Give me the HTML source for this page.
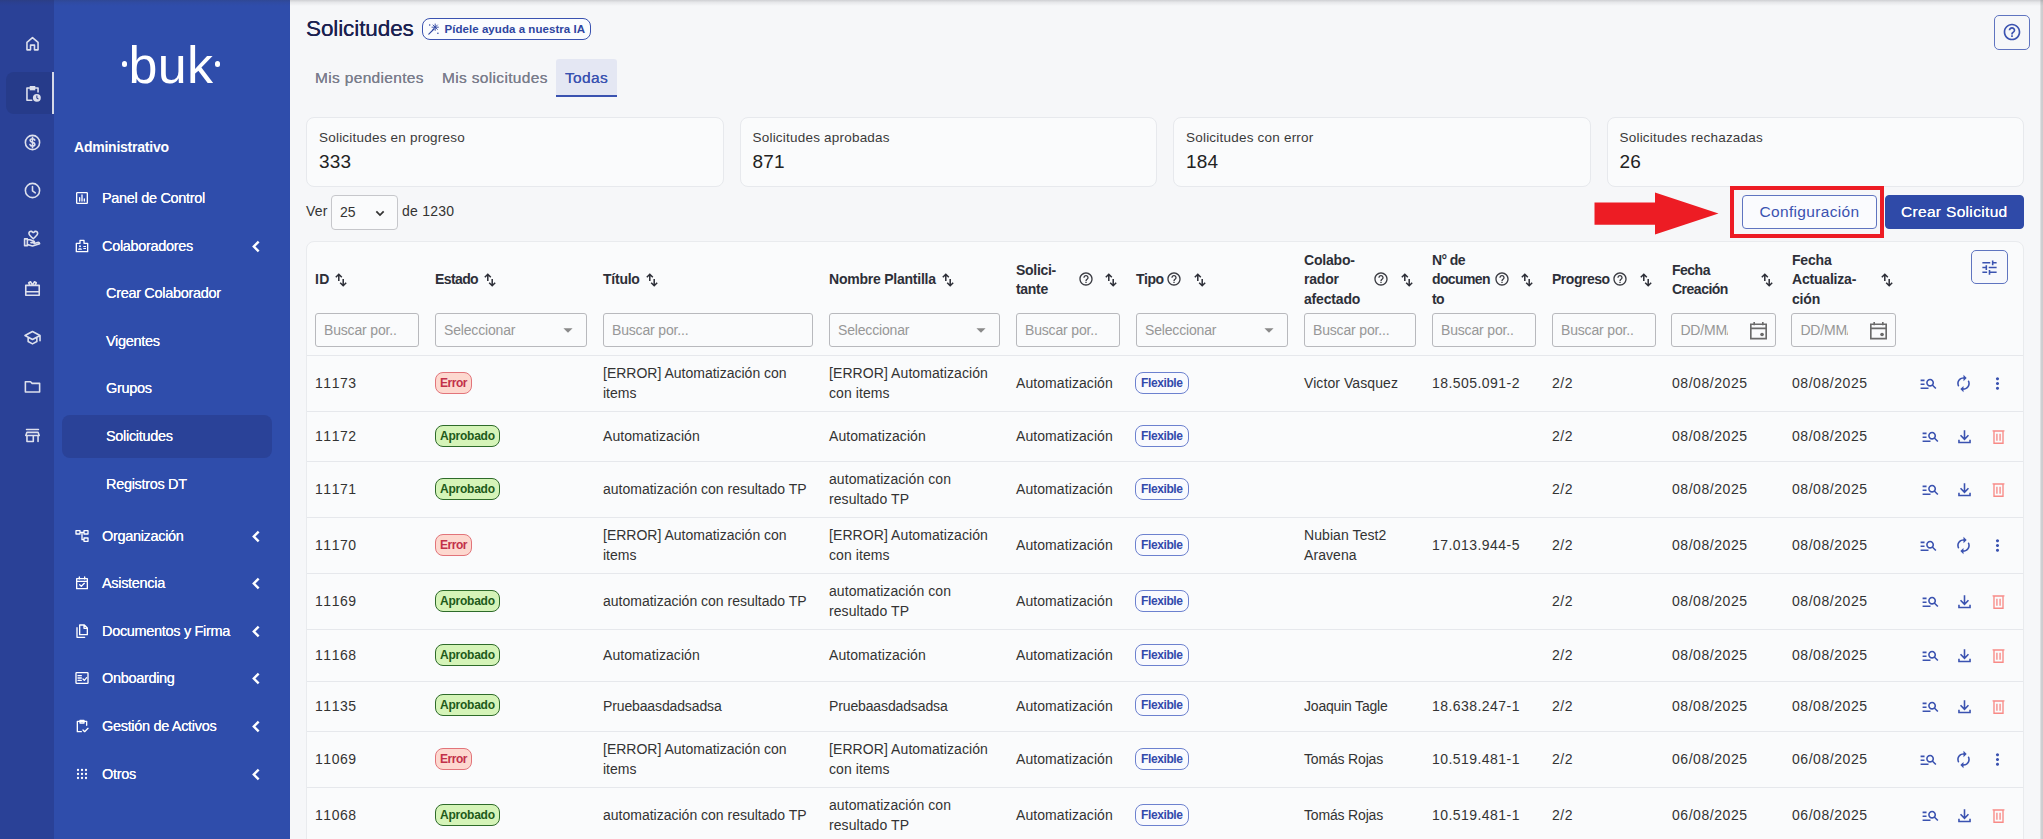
<!DOCTYPE html>
<html lang="es">
<head>
<meta charset="utf-8">
<title>Solicitudes</title>
<style>
*{box-sizing:border-box;margin:0;padding:0}
html,body{width:2043px;height:839px;overflow:hidden}
body{position:relative;background:#f6f7f9;font-family:"Liberation Sans",sans-serif;font-size:14px;color:#333;-webkit-font-smoothing:antialiased}
.abs{position:absolute}
/* rail */
#rail{position:absolute;left:0;top:0;width:54px;height:839px;background:#2a4197}
#rail .ri{position:absolute;left:22.500px;margin-top:1.500px;width:19px;height:19px;color:#dde0ed}
#rail .ri svg{width:19px;height:19px;display:block}
#rail .act{position:absolute;left:6px;top:72px;width:46px;height:42px;border-radius:8px 0 0 8px;background:#263b8a}
#rail .bar{position:absolute;left:52px;top:72px;width:2px;height:42px;background:#d5d9e8}
/* sidebar */
#side{position:absolute;left:54px;top:0;width:236px;height:839px;background:#2f4dab;color:#fff}
#side .logo{position:absolute;left:-54px;top:0;width:290px;height:110px;color:#fff}
#side .logo b{position:absolute;left:128.500px;top:24.500px;font-weight:normal;font-size:52px;line-height:80px;letter-spacing:.3px}
#side .logo i{position:absolute;top:61px;width:5.500px;height:5.500px;border-radius:50%;background:#fff}
#side .sec{position:absolute;left:20px;top:138px;font-weight:bold;font-size:14px;line-height:18px;letter-spacing:-.23px}
#side .it{position:absolute;left:48px;font-size:14.5px;line-height:18px;white-space:nowrap;letter-spacing:-.32px;text-shadow:0 0 .25px #fff}
#side .sub{left:52px}
#side .ic{position:absolute;left:20px;width:16px;height:16px;color:#fff}
#side .ic svg{width:16px;height:16px;display:block}
#side .chev{position:absolute;left:195.500px;width:13px;height:13px}
#side .sel{position:absolute;left:8px;top:415px;width:210px;height:43px;border-radius:8px;background:#2a4298}
/* main */
h1{position:absolute;left:306px;top:15px;font-size:22.5px;line-height:28px;font-weight:normal;color:#1b2150;letter-spacing:-.1px;text-shadow:0 0 .6px #1b2150}
.ai{position:absolute;left:422px;top:18px;width:169px;height:22px;border:1px solid #3a52b0;border-radius:8px;background:#fbfcfe;color:#2e45a0;font-weight:bold;font-size:11.500px;line-height:20.500px;white-space:nowrap;padding-left:21.500px;letter-spacing:.05px}
.ai svg{position:absolute;left:5px;top:3.500px;width:12px;height:12px}
.tab{position:absolute;top:67.500px;text-shadow:0 0 .4px currentColor;font-size:15.5px;line-height:20px;color:#7a7d8c;white-space:nowrap;letter-spacing:.33px}
.tabsel{position:absolute;left:556px;top:59px;width:61px;height:38px;background:#e4e7f3;border-bottom:2px solid #3a52b0;border-radius:3px 3px 0 0}
.help{position:absolute;left:1994px;top:15px;width:36px;height:35px;border:1px solid #5f74c0;border-radius:5px;color:#3a52b0}
.help svg{position:absolute;left:7px;top:6px;width:20px;height:20px}
.stat{position:absolute;top:117px;width:417.500px;height:70px;background:#fafbfc;border:1px solid #e7e9ed;border-radius:8px}
.stat .l{position:absolute;left:12px;top:11px;font-size:13.5px;line-height:18px;color:#3a3a3a;white-space:nowrap;letter-spacing:.21px}
/* toolbar */
.tb{position:absolute;top:202px;font-size:14px;line-height:18px;color:#333;white-space:nowrap;letter-spacing:.25px}
.selbox{position:absolute;left:331px;top:195px;width:67px;height:35px;border:1px solid #c6c7cb;border-radius:4px;background:#fafbfc}
.selbox span{position:absolute;left:8px;top:7px;font-size:14px;line-height:18px;color:#333}
.selbox svg{position:absolute;left:40px;top:9px;width:16px;height:16px}
.arrow{position:absolute;left:1594px;top:192px}
.redbox{position:absolute;left:1730px;top:186px;width:153.500px;height:51.500px;border:4px solid #ed1c24}
.btn{position:absolute;top:195px;height:34.400px;border-radius:4px;font-size:15.5px;line-height:32px;text-align:center;white-space:nowrap;letter-spacing:.33px}
.cfg{left:1742px;width:135px;border:1px solid #5f74c0;background:#fafbfe;color:#3a52b0}
.crear{left:1884.500px;width:139.500px;border:1px solid #2f4aa8;background:#2f4aa8;color:#fff;text-shadow:0 0 .5px #fff}
/* table */
.card{position:absolute;left:306px;top:241px;width:1718px;height:620px;background:#fafbfc;border:1px solid #e9ebee;border-radius:8px 8px 0 0;overflow:hidden}
.th{position:absolute;font-weight:bold;font-size:14px;line-height:19.400px;margin-top:.7px;color:#2d2f38;white-space:nowrap;letter-spacing:-.35px}
.hi{position:absolute;width:16px;height:16px;color:#3a3b42}
.hi svg{width:16px;height:16px;display:block}
.si{position:absolute;width:12px;height:14px;color:#2b2d36}
.si svg{width:12px;height:14px;display:block}
.tune{position:absolute;left:1664px;top:8px;width:37px;height:34px;border:1px solid #5f74c0;border-radius:5px;color:#3a52b0;background:#f7f8fc}
.tune svg{position:absolute;left:8px;top:7px;width:19px;height:19px}
.fi{position:absolute;top:71px;height:34px;border:1px solid #b8b9bd;border-radius:3px;background:#fafbfc;color:#979797;font-size:14px;line-height:32px;white-space:nowrap;overflow:hidden;letter-spacing:-.17px}
.fi span{position:absolute;left:8px;top:0}
.fi .car{position:absolute;right:7px;top:5px;width:22px;height:22px;color:#8a8a8a}
.fi .car svg,.fi .cal svg{width:100%;height:100%;display:block}
.fi .cal{position:absolute;right:5px;top:5px;width:23px;height:23px;color:#6a6a6a}
.fd span{width:48px;overflow:hidden}
.tr{position:absolute;left:0;width:1717px;border-top:1px solid #e6e8ec}
.tr .c{position:absolute;top:0;height:100%;display:flex;align-items:center;font-size:14px;line-height:19.3px;margin-top:0px;color:#333;white-space:nowrap;letter-spacing:.08px}
.tr .n{font-kerning:none;letter-spacing:.55px}
.tr .d{letter-spacing:.45px}
.bd{position:relative;top:-.5px;display:inline-block;height:22px;line-height:20px;border-radius:8px;font-size:12px;padding:0 4px;border:1px solid;letter-spacing:-.2px}
.er{letter-spacing:-.45px;background:#fdd8cf;border-color:#e2747a;color:#c23049}
.ap{letter-spacing:-.24px;background:#d5f4b8;border-color:#2e6b2a;color:#1e5a1a}
.fl{letter-spacing:-.39px;padding:0 5px;background:#f9fafe;border-color:#6c81cf;color:#3349ab}
.ai2{position:absolute;top:50%;margin-top:-9.500px;width:19px;height:19px;color:#3a52b0}
.ai2 svg{width:19px;height:19px;display:block}
.ai2.red{color:#f88a86}
.edgeR{position:absolute;left:2039.5px;top:0;width:4px;height:839px;background:linear-gradient(90deg,#e8e9eb,#cfd0d2 35%,#c9cacc)}
.edgeT{position:absolute;left:0;top:0;width:2043px;height:6px;background:linear-gradient(180deg,rgba(50,50,60,.2),rgba(50,50,60,.08) 40%,rgba(50,50,60,0))}
.stat .v{position:absolute;left:12px;top:32px;font-size:19px;line-height:24px;color:#222;letter-spacing:.15px}
</style>
</head>
<body>
<div id="rail">
<div class="act"></div><div class="bar"></div>
<i class="ri" style="top:32px"><svg viewBox="0 0 24 24"><path fill="none" stroke="currentColor" stroke-width="2" stroke-linejoin="round" stroke-linecap="round" d="M5 10.500L12 4.500l7 6V20h-4.500v-6h-5v6H5z"/></svg></i>
<i class="ri" style="top:82px"><svg viewBox="0 0 24 24"><path fill="none" stroke="currentColor" stroke-width="2" stroke-linejoin="round" stroke-linecap="round" d="M11 20.500H5V5h14v5"/><path fill="currentColor" d="M8.500 2.500h7V8h-7z"/><circle cx="17.500" cy="17.500" r="5" fill="currentColor"/><path fill="none" stroke="#263b8a" stroke-width="1.300" d="M17.500 14.500v3.200l2 1.500"/></svg></i>
<i class="ri" style="top:131px"><svg viewBox="0 0 24 24"><circle cx="12" cy="12" r="9" fill="none" stroke="currentColor" stroke-width="2" stroke-linejoin="round" stroke-linecap="round"/><path fill="none" stroke="currentColor" stroke-width="2" stroke-linejoin="round" stroke-linecap="round" stroke-width="1.800" d="M15 9c-.5-1.200-1.600-1.800-3-1.800-1.700 0-3 .9-3 2.300 0 3 6 1.700 6 4.800 0 1.500-1.300 2.400-3 2.400-1.600 0-2.800-.8-3.200-2.100M12 5.500v13"/></svg></i>
<i class="ri" style="top:179px"><svg viewBox="0 0 24 24"><circle cx="12" cy="12" r="9" fill="none" stroke="currentColor" stroke-width="2" stroke-linejoin="round" stroke-linecap="round"/><path fill="none" stroke="currentColor" stroke-width="2" stroke-linejoin="round" stroke-linecap="round" d="M12 7v5.500l3.500 2.500"/></svg></i>
<i class="ri" style="top:227px"><svg viewBox="0 0 24 24"><path fill="currentColor" d="M16 2c-1.200 0-2.300.7-3 1.600C12.300 2.700 11.200 2 10 2 8 2 6.500 3.600 6.500 5.500c0 2.900 4 5.700 6.500 8 2.500-2.300 6.500-5.100 6.500-8C19.500 3.600 18 2 16 2zm-3 8.900c-2.200-1.900-4.500-3.900-4.500-5.400C8.500 4.700 9.200 4 10 4c.9 0 1.800.8 2.100 1.500h1.800C14.200 4.800 15.100 4 16 4c.8 0 1.500.7 1.500 1.500 0 1.500-2.300 3.500-4.500 5.400z"/><path fill="none" stroke="currentColor" stroke-width="2" stroke-linejoin="round" stroke-linecap="round" d="M2 12.500h3.500v8.500H2zM5.500 13.500h3.300l5 1.900c.8.300.9 1.800-.4 1.800H10M5.500 19.500l6.500 2 9-3c-.3-1.300-1.400-1.700-2.500-1.500l-4.500 1.300"/></svg></i>
<i class="ri" style="top:277px"><svg viewBox="0 0 24 24"><path fill="none" stroke="currentColor" stroke-width="2" stroke-linejoin="round" stroke-linecap="round" d="M3.500 8h17v12.500h-17zM3.500 16h17M9 8L7.200 4.800 9.500 3.500 12 7.500l2.500-4 2.300 1.300L15 8"/></svg></i>
<i class="ri" style="top:326px"><svg viewBox="0 0 24 24"><path fill="none" stroke="currentColor" stroke-width="2" stroke-linejoin="round" stroke-linecap="round" d="M2.500 9.500L12 4.500l9.500 5L12 14.500zM6.500 12v5L12 20l5.500-3v-5M21.500 9.500V16"/></svg></i>
<i class="ri" style="top:375px"><svg viewBox="0 0 24 24"><path fill="none" stroke="currentColor" stroke-width="2" stroke-linejoin="round" stroke-linecap="round" d="M3 6h6.500l2 2H21v11H3z"/></svg></i>
<i class="ri" style="top:424px"><svg viewBox="0 0 24 24"><path fill="none" stroke="currentColor" stroke-width="2" stroke-linejoin="round" stroke-linecap="round" d="M4.500 4.500h15M5 8h14l1.500 4h-17zM5 12v7.500h8V12M19 12v7.500"/></svg></i>
</div>
<div id="side">
<div class="logo"><i style="left:121.700px"></i><b>buk</b><i style="left:214.700px"></i></div>
<div class="sec">Administrativo</div>
<div class="sel"></div>
<div class="it" style="top:189px">Panel de Control</div>
<i class="ic" style="top:190px"><svg viewBox="0 0 24 24"><rect x="4" y="4" width="16" height="16" rx="1" fill="none" stroke="currentColor" stroke-width="2" stroke-linejoin="round" stroke-linecap="round"/><path fill="none" stroke="currentColor" stroke-width="2" stroke-linejoin="round" stroke-linecap="round" d="M8.500 16.500v-5M12 16.500v-9M15.500 16.500v-3"/></svg></i>
<div class="it" style="top:237px">Colaboradores</div>
<i class="ic" style="top:238px"><svg viewBox="0 0 24 24"><path fill="none" stroke="currentColor" stroke-width="2" stroke-linejoin="round" stroke-linecap="round" d="M3.500 8h5.500V3.500h6V8h5.500v12.500h-17z"/><circle cx="9" cy="12.500" r="1.500" fill="currentColor"/><path fill="currentColor" d="M6 17.500c0-1.500 2-2.200 3-2.200s3 .7 3 2.200zM14 12h4v1.500h-4zM14 15h4v1.500h-4z"/></svg></i>
<svg class="chev" viewBox="0 0 12 12" style="top:240px"><path fill="none" stroke="#fff" stroke-width="2.200" d="M8 1.500L3.500 6 8 10.500"/></svg>
<div class="it sub" style="top:284px">Crear Colaborador</div>
<div class="it sub" style="top:332px">Vigentes</div>
<div class="it sub" style="top:379px">Grupos</div>
<div class="it sub" style="top:427px">Solicitudes</div>
<div class="it sub" style="top:475px">Registros DT</div>
<div class="it" style="top:527px">Organización</div>
<i class="ic" style="top:528px"><svg viewBox="0 0 24 24"><path fill="none" stroke="currentColor" stroke-width="2" stroke-linejoin="round" stroke-linecap="round" d="M3 4h6v5H3zM15 4h6v5h-6zM15 15h6v5h-6zM9 6.500h6M12 6.500v11h3"/></svg></i>
<svg class="chev" viewBox="0 0 12 12" style="top:530px"><path fill="none" stroke="#fff" stroke-width="2.200" d="M8 1.500L3.500 6 8 10.500"/></svg>
<div class="it" style="top:574px">Asistencia</div>
<i class="ic" style="top:575px"><svg viewBox="0 0 24 24"><path fill="none" stroke="currentColor" stroke-width="2" stroke-linejoin="round" stroke-linecap="round" d="M4 5.500h16v15H4zM4 9.500h16M8 3v3M16 3v3M8.500 14.500l2.500 2.500 4.500-4.500"/></svg></i>
<svg class="chev" viewBox="0 0 12 12" style="top:577px"><path fill="none" stroke="#fff" stroke-width="2.200" d="M8 1.500L3.500 6 8 10.500"/></svg>
<div class="it" style="top:622px">Documentos y Firma</div>
<i class="ic" style="top:623px"><svg viewBox="0 0 24 24"><path fill="none" stroke="currentColor" stroke-width="2" stroke-linejoin="round" stroke-linecap="round" d="M8.500 3h7l4.500 4.500V17.500H8.500zM15 3.500V8h4.500M4.500 7v14.500H16"/></svg></i>
<svg class="chev" viewBox="0 0 12 12" style="top:625px"><path fill="none" stroke="#fff" stroke-width="2.200" d="M8 1.500L3.500 6 8 10.500"/></svg>
<div class="it" style="top:669px">Onboarding</div>
<i class="ic" style="top:670px"><svg viewBox="0 0 24 24"><rect x="3" y="4" width="18" height="16" rx="1" fill="none" stroke="currentColor" stroke-width="2" stroke-linejoin="round" stroke-linecap="round"/><path fill="none" stroke="currentColor" stroke-width="2" stroke-linejoin="round" stroke-linecap="round" stroke-width="1.700" d="M6 8.500h5M6 12h5M6 15.500h5M13.500 13.500l2 2 3.500-4"/></svg></i>
<svg class="chev" viewBox="0 0 12 12" style="top:672px"><path fill="none" stroke="#fff" stroke-width="2.200" d="M8 1.500L3.500 6 8 10.500"/></svg>
<div class="it" style="top:717px">Gestión de Activos</div>
<i class="ic" style="top:718px"><svg viewBox="0 0 24 24"><path fill="none" stroke="currentColor" stroke-width="2" stroke-linejoin="round" stroke-linecap="round" d="M11 20.500H5V5h14v6M9 3.500h6v4H9zM13.500 18l2.500 2.500 5-5"/></svg></i>
<svg class="chev" viewBox="0 0 12 12" style="top:720px"><path fill="none" stroke="#fff" stroke-width="2.200" d="M8 1.500L3.500 6 8 10.500"/></svg>
<div class="it" style="top:765px">Otros</div>
<i class="ic" style="top:766px"><svg viewBox="0 0 24 24"><circle cx="6" cy="6" r="1.700" fill="currentColor"/><circle cx="6" cy="12" r="1.700" fill="currentColor"/><circle cx="6" cy="18" r="1.700" fill="currentColor"/><circle cx="12" cy="6" r="1.700" fill="currentColor"/><circle cx="12" cy="12" r="1.700" fill="currentColor"/><circle cx="12" cy="18" r="1.700" fill="currentColor"/><circle cx="18" cy="6" r="1.700" fill="currentColor"/><circle cx="18" cy="12" r="1.700" fill="currentColor"/><circle cx="18" cy="18" r="1.700" fill="currentColor"/></svg></i>
<svg class="chev" viewBox="0 0 12 12" style="top:768px"><path fill="none" stroke="#fff" stroke-width="2.200" d="M8 1.500L3.500 6 8 10.500"/></svg>
</div>
<h1>Solicitudes</h1>
<div class="ai"><svg viewBox="0 0 12 12"><path fill="none" stroke="currentColor" stroke-width="1.100" stroke-linecap="round" d="M.800 11.200L6 6"/><path fill="none" stroke="currentColor" stroke-width=".900" stroke-linecap="round" d="M7.200 1v6.400M4 4.200h6.400M5 2l4.400 4.400M9.400 2L5 6.400"/><circle cx="1.700" cy="2" r=".750" fill="currentColor"/><circle cx="9.900" cy="10.300" r=".800" fill="currentColor"/></svg>Pídele ayuda a nuestra IA</div>
<div class="tab" style="left:315px">Mis pendientes</div>
<div class="tab" style="left:442px">Mis solicitudes</div>
<div class="tabsel"></div>
<div class="tab" style="left:565px;color:#3a52b0">Todas</div>
<div class="help"><svg viewBox="0 0 24 24"><path fill="currentColor" d="M11 18h2v-2h-2v2zm1-16C6.48 2 2 6.48 2 12s4.48 10 10 10 10-4.48 10-10S17.52 2 12 2zm0 18c-4.41 0-8-3.59-8-8s3.59-8 8-8 8 3.59 8 8-3.59 8-8 8zm0-14c-2.21 0-4 1.79-4 4h2c0-1.1.9-2 2-2s2 .9 2 2c0 2-3 1.75-3 5h2c0-2.25 3-2.5 3-5 0-2.21-1.79-4-4-4z"/></svg></div>
<div class="stat" style="left:306px"><div class="l">Solicitudes en progreso</div><div class="v">333</div></div>
<div class="stat" style="left:739.500px"><div class="l">Solicitudes aprobadas</div><div class="v">871</div></div>
<div class="stat" style="left:1173px"><div class="l">Solicitudes con error</div><div class="v">184</div></div>
<div class="stat" style="left:1606.500px"><div class="l">Solicitudes rechazadas</div><div class="v">26</div></div>
<div class="edgeR"></div><div class="edgeT"></div>
<!--TABLE-->
<div class="tb" style="left:306px">Ver</div>
<div class="selbox"><span>25</span><svg viewBox="0 0 24 24"><path fill="none" stroke="#333" stroke-width="2.600" d="M6.500 9.500l5.500 5.500 5.500-5.500"/></svg></div>
<div class="tb" style="left:402px">de 1230</div>
<svg class="arrow" viewBox="0 0 126 44" width="126" height="44"><path fill="#ed1c24" d="M.500 10.400H61V.400L124.500 21.400 61 42.500V32.700H.500z"/></svg>
<div class="redbox"></div>
<div class="btn cfg">Configuración</div>
<div class="btn crear">Crear Solicitud</div>
<div class="card">
<div class="th" style="left:8px;top:27.6px;letter-spacing:0.3px">ID</div>
<div class="si" style="left:28.3px;top:31px"><svg viewBox="0 0 12 14"><path fill="none" stroke="currentColor" stroke-width="1.500" d="M3.800 8V1.300M.800 4.200l3-3 3 3M8.200 6v6.700M5.200 9.800l3 3 3-3"/></svg></div>
<div class="th" style="left:128px;top:27.6px;letter-spacing:-0.6px">Estado</div>
<div class="si" style="left:177.3px;top:31px"><svg viewBox="0 0 12 14"><path fill="none" stroke="currentColor" stroke-width="1.500" d="M3.800 8V1.300M.800 4.200l3-3 3 3M8.200 6v6.700M5.200 9.800l3 3 3-3"/></svg></div>
<div class="th" style="left:296px;top:27.6px;letter-spacing:-0.24px">Título</div>
<div class="si" style="left:339.3px;top:31px"><svg viewBox="0 0 12 14"><path fill="none" stroke="currentColor" stroke-width="1.500" d="M3.800 8V1.300M.800 4.200l3-3 3 3M8.200 6v6.700M5.200 9.800l3 3 3-3"/></svg></div>
<div class="th" style="left:522px;top:27.6px;letter-spacing:-0.23px">Nombre Plantilla</div>
<div class="si" style="left:635.3px;top:31px"><svg viewBox="0 0 12 14"><path fill="none" stroke="currentColor" stroke-width="1.500" d="M3.800 8V1.300M.800 4.200l3-3 3 3M8.200 6v6.700M5.200 9.800l3 3 3-3"/></svg></div>
<div class="th" style="left:709px;top:17.9px;letter-spacing:-0.3px">Solici-<br>tante</div>
<div class="hi" style="left:771px;top:29px"><svg viewBox="0 0 24 24"><path fill="currentColor" d="M11 18h2v-2h-2v2zm1-16C6.48 2 2 6.48 2 12s4.48 10 10 10 10-4.48 10-10S17.52 2 12 2zm0 18c-4.41 0-8-3.59-8-8s3.59-8 8-8 8 3.59 8 8-3.59 8-8 8zm0-14c-2.21 0-4 1.79-4 4h2c0-1.1.9-2 2-2s2 .9 2 2c0 2-3 1.75-3 5h2c0-2.25 3-2.5 3-5 0-2.21-1.79-4-4-4z"/></svg></div>
<div class="si" style="left:798.3px;top:31px"><svg viewBox="0 0 12 14"><path fill="none" stroke="currentColor" stroke-width="1.500" d="M3.800 8V1.300M.800 4.200l3-3 3 3M8.200 6v6.700M5.200 9.800l3 3 3-3"/></svg></div>
<div class="th" style="left:829px;top:27.6px;letter-spacing:-0.4px">Tipo</div>
<div class="hi" style="left:859px;top:29px"><svg viewBox="0 0 24 24"><path fill="currentColor" d="M11 18h2v-2h-2v2zm1-16C6.48 2 2 6.48 2 12s4.48 10 10 10 10-4.48 10-10S17.52 2 12 2zm0 18c-4.41 0-8-3.59-8-8s3.59-8 8-8 8 3.59 8 8-3.59 8-8 8zm0-14c-2.21 0-4 1.79-4 4h2c0-1.1.9-2 2-2s2 .9 2 2c0 2-3 1.75-3 5h2c0-2.25 3-2.5 3-5 0-2.21-1.79-4-4-4z"/></svg></div>
<div class="si" style="left:887.3px;top:31px"><svg viewBox="0 0 12 14"><path fill="none" stroke="currentColor" stroke-width="1.500" d="M3.800 8V1.300M.800 4.200l3-3 3 3M8.200 6v6.700M5.200 9.800l3 3 3-3"/></svg></div>
<div class="th" style="left:997px;top:8.2px;letter-spacing:-0.18px">Colabo-<br>rador<br>afectado</div>
<div class="hi" style="left:1066px;top:29px"><svg viewBox="0 0 24 24"><path fill="currentColor" d="M11 18h2v-2h-2v2zm1-16C6.48 2 2 6.48 2 12s4.48 10 10 10 10-4.48 10-10S17.52 2 12 2zm0 18c-4.41 0-8-3.59-8-8s3.59-8 8-8 8 3.59 8 8-3.59 8-8 8zm0-14c-2.21 0-4 1.79-4 4h2c0-1.1.9-2 2-2s2 .9 2 2c0 2-3 1.75-3 5h2c0-2.25 3-2.5 3-5 0-2.21-1.79-4-4-4z"/></svg></div>
<div class="si" style="left:1094.3px;top:31px"><svg viewBox="0 0 12 14"><path fill="none" stroke="currentColor" stroke-width="1.500" d="M3.800 8V1.300M.800 4.200l3-3 3 3M8.200 6v6.700M5.200 9.800l3 3 3-3"/></svg></div>
<div class="th" style="left:1125px;top:8.2px;letter-spacing:-0.62px">N° de<br>documen<br>to</div>
<div class="hi" style="left:1187px;top:29px"><svg viewBox="0 0 24 24"><path fill="currentColor" d="M11 18h2v-2h-2v2zm1-16C6.48 2 2 6.48 2 12s4.48 10 10 10 10-4.48 10-10S17.52 2 12 2zm0 18c-4.41 0-8-3.59-8-8s3.59-8 8-8 8 3.59 8 8-3.59 8-8 8zm0-14c-2.21 0-4 1.79-4 4h2c0-1.1.9-2 2-2s2 .9 2 2c0 2-3 1.75-3 5h2c0-2.25 3-2.5 3-5 0-2.21-1.79-4-4-4z"/></svg></div>
<div class="si" style="left:1214.3px;top:31px"><svg viewBox="0 0 12 14"><path fill="none" stroke="currentColor" stroke-width="1.500" d="M3.800 8V1.300M.800 4.200l3-3 3 3M8.200 6v6.700M5.200 9.800l3 3 3-3"/></svg></div>
<div class="th" style="left:1245px;top:27.6px;letter-spacing:-0.48px">Progreso</div>
<div class="hi" style="left:1305px;top:29px"><svg viewBox="0 0 24 24"><path fill="currentColor" d="M11 18h2v-2h-2v2zm1-16C6.48 2 2 6.48 2 12s4.48 10 10 10 10-4.48 10-10S17.52 2 12 2zm0 18c-4.41 0-8-3.59-8-8s3.59-8 8-8 8 3.59 8 8-3.59 8-8 8zm0-14c-2.21 0-4 1.79-4 4h2c0-1.1.9-2 2-2s2 .9 2 2c0 2-3 1.75-3 5h2c0-2.25 3-2.5 3-5 0-2.21-1.79-4-4-4z"/></svg></div>
<div class="si" style="left:1333.3px;top:31px"><svg viewBox="0 0 12 14"><path fill="none" stroke="currentColor" stroke-width="1.500" d="M3.800 8V1.300M.800 4.200l3-3 3 3M8.200 6v6.700M5.200 9.800l3 3 3-3"/></svg></div>
<div class="th" style="left:1365px;top:17.9px;letter-spacing:-0.5px">Fecha<br>Creación</div>
<div class="si" style="left:1454.3px;top:31px"><svg viewBox="0 0 12 14"><path fill="none" stroke="currentColor" stroke-width="1.500" d="M3.800 8V1.300M.800 4.200l3-3 3 3M8.200 6v6.700M5.200 9.800l3 3 3-3"/></svg></div>
<div class="th" style="left:1485px;top:8.2px;letter-spacing:-0.2px">Fecha<br>Actualiza-<br>ción</div>
<div class="si" style="left:1574.3px;top:31px"><svg viewBox="0 0 12 14"><path fill="none" stroke="currentColor" stroke-width="1.500" d="M3.800 8V1.300M.800 4.200l3-3 3 3M8.200 6v6.700M5.200 9.800l3 3 3-3"/></svg></div>
<div class="tune"><svg viewBox="0 0 24 24"><path fill="currentColor" d="M3 17v2h6v-2H3zM3 5v2h10V5H3zm10 16v-2h8v-2h-8v-2h-2v6h2zM7 9v2H3v2h4v2h2V9H7zm14 4v-2H11v2h10zm-6-4h2V7h4V5h-4V3h-2v6z"/></svg></div>
<div class="fi ft" style="left:8px;width:104px"><span>Buscar por..</span></div>
<div class="fi fs" style="left:128px;width:152px"><span>Seleccionar</span><i class="car"><svg viewBox="0 0 24 24"><path fill="currentColor" d="M7 10l5 5 5-5z"/></svg></i></div>
<div class="fi ft" style="left:296px;width:210px"><span>Buscar por...</span></div>
<div class="fi fs" style="left:522px;width:171px"><span>Seleccionar</span><i class="car"><svg viewBox="0 0 24 24"><path fill="currentColor" d="M7 10l5 5 5-5z"/></svg></i></div>
<div class="fi ft" style="left:709px;width:104px"><span>Buscar por..</span></div>
<div class="fi fs" style="left:829px;width:152px"><span>Seleccionar</span><i class="car"><svg viewBox="0 0 24 24"><path fill="currentColor" d="M7 10l5 5 5-5z"/></svg></i></div>
<div class="fi ft" style="left:997px;width:112px"><span>Buscar por...</span></div>
<div class="fi ft" style="left:1125px;width:104px"><span>Buscar por..</span></div>
<div class="fi ft" style="left:1245px;width:104px"><span>Buscar por..</span></div>
<div class="fi fd" style="left:1364.4px;width:104.59999999999991px"><span>DD/MM/</span><i class="cal"><svg viewBox="0 0 24 24"><path fill="none" stroke="currentColor" stroke-width="1.700" d="M4 5.500h16v15H4zM4 9.800h16M7.500 3v3.500M16.500 3v3.500"/><circle cx="15.700" cy="16.200" r="1.900" fill="currentColor"/></svg></i></div>
<div class="fi fd" style="left:1484.4px;width:104.59999999999991px"><span>DD/MM/</span><i class="cal"><svg viewBox="0 0 24 24"><path fill="none" stroke="currentColor" stroke-width="1.700" d="M4 5.500h16v15H4zM4 9.800h16M7.500 3v3.500M16.500 3v3.500"/><circle cx="15.700" cy="16.200" r="1.900" fill="currentColor"/></svg></i></div>
<div class="tr" style="top:113px;height:56px">
<div class="c n" style="left:8px">11173</div>
<div class="c" style="left:128px"><b class="bd er">Error</b></div>
<div class="c" style="left:296px"><span style="letter-spacing:0">[ERROR] Automatización con<br>items</span></div>
<div class="c" style="left:522px">[ERROR] Automatización<br>con items</div>
<div class="c" style="left:709px">Automatización</div>
<div class="c" style="left:828px"><b class="bd fl">Flexible</b></div>
<div class="c" style="left:997px">Victor Vasquez</div>
<div class="c n d" style="left:1125px">18.505.091-2</div>
<div class="c n" style="left:1245px">2/2</div>
<div class="c n" style="left:1365px">08/08/2025</div>
<div class="c n" style="left:1485px">08/08/2025</div>
<i class="ai2" style="left:1611.5px"><svg viewBox="0 0 24 24"><path fill="currentColor" d="M7 9H2V7h5v2zm0 3H2v2h5v-2zm13.59 7l-3.83-3.83c-.8.52-1.74.83-2.76.83-2.76 0-5-2.24-5-5s2.24-5 5-5 5 2.24 5 5c0 1.02-.31 1.96-.83 2.75L22 17.59 20.59 19zM17 11c0-1.650-1.350-3-3-3s-3 1.350-3 3 1.350 3 3 3 3-1.350 3-3zM2 19h10v-2H2v2z"/></svg></i><i class="ai2" style="left:1646.5px"><svg viewBox="0 0 24 24"><path fill="currentColor" d="M12 6v3l4-4-4-4v3c-4.420 0-8 3.580-8 8 0 1.570.46 3.030 1.240 4.260L6.7 14.8c-.45-.83-.7-1.790-.7-2.800 0-3.310 2.690-6 6-6zm6.760 1.740L17.3 9.200c.44.84.7 1.790.7 2.800 0 3.310-2.690 6-6 6v-3l-4 4 4 4v-3c4.420 0 8-3.580 8-8 0-1.570-.46-3.030-1.240-4.260z"/></svg></i><i class="ai2" style="left:1681.0px"><svg viewBox="0 0 24 24"><path fill="currentColor" d="M12 8c1.1 0 2-.9 2-2s-.9-2-2-2-2 .9-2 2 .9 2 2 2zm0 2c-1.1 0-2 .9-2 2s.9 2 2 2 2-.9 2-2-.9-2-2-2zm0 6c-1.1 0-2 .9-2 2s.9 2 2 2 2-.9 2-2-.9-2-2-2z"/></svg></i>
</div>
<div class="tr" style="top:169px;height:50px">
<div class="c n" style="left:8px">11172</div>
<div class="c" style="left:128px"><b class="bd ap">Aprobado</b></div>
<div class="c" style="left:296px">Automatización</div>
<div class="c" style="left:522px">Automatización</div>
<div class="c" style="left:709px">Automatización</div>
<div class="c" style="left:828px"><b class="bd fl">Flexible</b></div>
<div class="c n" style="left:1245px">2/2</div>
<div class="c n" style="left:1365px">08/08/2025</div>
<div class="c n" style="left:1485px">08/08/2025</div>
<i class="ai2" style="left:1614.0px"><svg viewBox="0 0 24 24"><path fill="currentColor" d="M7 9H2V7h5v2zm0 3H2v2h5v-2zm13.59 7l-3.83-3.83c-.8.52-1.74.83-2.76.83-2.76 0-5-2.24-5-5s2.24-5 5-5 5 2.24 5 5c0 1.02-.31 1.96-.83 2.75L22 17.59 20.59 19zM17 11c0-1.650-1.350-3-3-3s-3 1.350-3 3 1.350 3 3 3 3-1.350 3-3zM2 19h10v-2H2v2z"/></svg></i><i class="ai2" style="left:1648.0px"><svg viewBox="0 0 24 24"><path fill="none" stroke="currentColor" stroke-width="2" d="M12 4v11M7 10.500l5 5 5-5M5 16v3.500h14V16"/></svg></i><i class="ai2 red" style="left:1682.0px"><svg viewBox="0 0 24 24"><path fill="none" stroke="currentColor" stroke-width="1.700" d="M6.300 5.200h11.400v15.300H6.300zM4.500 4.800h15M10 8.500v9M14 8.500v9"/></svg></i>
</div>
<div class="tr" style="top:219px;height:56px">
<div class="c n" style="left:8px">11171</div>
<div class="c" style="left:128px"><b class="bd ap">Aprobado</b></div>
<div class="c" style="left:296px"><span style="letter-spacing:0">automatización con resultado TP</span></div>
<div class="c" style="left:522px">automatización con<br>resultado TP</div>
<div class="c" style="left:709px">Automatización</div>
<div class="c" style="left:828px"><b class="bd fl">Flexible</b></div>
<div class="c n" style="left:1245px">2/2</div>
<div class="c n" style="left:1365px">08/08/2025</div>
<div class="c n" style="left:1485px">08/08/2025</div>
<i class="ai2" style="left:1614.0px"><svg viewBox="0 0 24 24"><path fill="currentColor" d="M7 9H2V7h5v2zm0 3H2v2h5v-2zm13.59 7l-3.83-3.83c-.8.52-1.74.83-2.76.83-2.76 0-5-2.24-5-5s2.24-5 5-5 5 2.24 5 5c0 1.02-.31 1.96-.83 2.75L22 17.59 20.59 19zM17 11c0-1.650-1.350-3-3-3s-3 1.350-3 3 1.350 3 3 3 3-1.350 3-3zM2 19h10v-2H2v2z"/></svg></i><i class="ai2" style="left:1648.0px"><svg viewBox="0 0 24 24"><path fill="none" stroke="currentColor" stroke-width="2" d="M12 4v11M7 10.500l5 5 5-5M5 16v3.500h14V16"/></svg></i><i class="ai2 red" style="left:1682.0px"><svg viewBox="0 0 24 24"><path fill="none" stroke="currentColor" stroke-width="1.700" d="M6.300 5.200h11.400v15.300H6.300zM4.500 4.800h15M10 8.500v9M14 8.500v9"/></svg></i>
</div>
<div class="tr" style="top:275px;height:56px">
<div class="c n" style="left:8px">11170</div>
<div class="c" style="left:128px"><b class="bd er">Error</b></div>
<div class="c" style="left:296px"><span style="letter-spacing:0">[ERROR] Automatización con<br>items</span></div>
<div class="c" style="left:522px">[ERROR] Automatización<br>con items</div>
<div class="c" style="left:709px">Automatización</div>
<div class="c" style="left:828px"><b class="bd fl">Flexible</b></div>
<div class="c" style="left:997px">Nubian Test2<br>Aravena</div>
<div class="c n d" style="left:1125px">17.013.944-5</div>
<div class="c n" style="left:1245px">2/2</div>
<div class="c n" style="left:1365px">08/08/2025</div>
<div class="c n" style="left:1485px">08/08/2025</div>
<i class="ai2" style="left:1611.5px"><svg viewBox="0 0 24 24"><path fill="currentColor" d="M7 9H2V7h5v2zm0 3H2v2h5v-2zm13.59 7l-3.83-3.83c-.8.52-1.74.83-2.76.83-2.76 0-5-2.24-5-5s2.24-5 5-5 5 2.24 5 5c0 1.02-.31 1.96-.83 2.75L22 17.59 20.59 19zM17 11c0-1.650-1.350-3-3-3s-3 1.350-3 3 1.350 3 3 3 3-1.350 3-3zM2 19h10v-2H2v2z"/></svg></i><i class="ai2" style="left:1646.5px"><svg viewBox="0 0 24 24"><path fill="currentColor" d="M12 6v3l4-4-4-4v3c-4.420 0-8 3.580-8 8 0 1.570.46 3.030 1.240 4.260L6.7 14.8c-.45-.83-.7-1.790-.7-2.800 0-3.310 2.690-6 6-6zm6.760 1.740L17.3 9.200c.44.84.7 1.790.7 2.800 0 3.310-2.690 6-6 6v-3l-4 4 4 4v-3c4.420 0 8-3.580 8-8 0-1.570-.46-3.030-1.240-4.260z"/></svg></i><i class="ai2" style="left:1681.0px"><svg viewBox="0 0 24 24"><path fill="currentColor" d="M12 8c1.1 0 2-.9 2-2s-.9-2-2-2-2 .9-2 2 .9 2 2 2zm0 2c-1.1 0-2 .9-2 2s.9 2 2 2 2-.9 2-2-.9-2-2-2zm0 6c-1.1 0-2 .9-2 2s.9 2 2 2 2-.9 2-2-.9-2-2-2z"/></svg></i>
</div>
<div class="tr" style="top:331px;height:56px">
<div class="c n" style="left:8px">11169</div>
<div class="c" style="left:128px"><b class="bd ap">Aprobado</b></div>
<div class="c" style="left:296px"><span style="letter-spacing:0">automatización con resultado TP</span></div>
<div class="c" style="left:522px">automatización con<br>resultado TP</div>
<div class="c" style="left:709px">Automatización</div>
<div class="c" style="left:828px"><b class="bd fl">Flexible</b></div>
<div class="c n" style="left:1245px">2/2</div>
<div class="c n" style="left:1365px">08/08/2025</div>
<div class="c n" style="left:1485px">08/08/2025</div>
<i class="ai2" style="left:1614.0px"><svg viewBox="0 0 24 24"><path fill="currentColor" d="M7 9H2V7h5v2zm0 3H2v2h5v-2zm13.59 7l-3.83-3.83c-.8.52-1.74.83-2.76.83-2.76 0-5-2.24-5-5s2.24-5 5-5 5 2.24 5 5c0 1.02-.31 1.96-.83 2.75L22 17.59 20.59 19zM17 11c0-1.650-1.350-3-3-3s-3 1.350-3 3 1.350 3 3 3 3-1.350 3-3zM2 19h10v-2H2v2z"/></svg></i><i class="ai2" style="left:1648.0px"><svg viewBox="0 0 24 24"><path fill="none" stroke="currentColor" stroke-width="2" d="M12 4v11M7 10.500l5 5 5-5M5 16v3.500h14V16"/></svg></i><i class="ai2 red" style="left:1682.0px"><svg viewBox="0 0 24 24"><path fill="none" stroke="currentColor" stroke-width="1.700" d="M6.300 5.200h11.400v15.300H6.300zM4.500 4.800h15M10 8.500v9M14 8.500v9"/></svg></i>
</div>
<div class="tr" style="top:387px;height:52px">
<div class="c n" style="left:8px">11168</div>
<div class="c" style="left:128px"><b class="bd ap">Aprobado</b></div>
<div class="c" style="left:296px">Automatización</div>
<div class="c" style="left:522px">Automatización</div>
<div class="c" style="left:709px">Automatización</div>
<div class="c" style="left:828px"><b class="bd fl">Flexible</b></div>
<div class="c n" style="left:1245px">2/2</div>
<div class="c n" style="left:1365px">08/08/2025</div>
<div class="c n" style="left:1485px">08/08/2025</div>
<i class="ai2" style="left:1614.0px"><svg viewBox="0 0 24 24"><path fill="currentColor" d="M7 9H2V7h5v2zm0 3H2v2h5v-2zm13.59 7l-3.83-3.83c-.8.52-1.74.83-2.76.83-2.76 0-5-2.24-5-5s2.24-5 5-5 5 2.24 5 5c0 1.02-.31 1.96-.83 2.75L22 17.59 20.59 19zM17 11c0-1.650-1.350-3-3-3s-3 1.350-3 3 1.350 3 3 3 3-1.350 3-3zM2 19h10v-2H2v2z"/></svg></i><i class="ai2" style="left:1648.0px"><svg viewBox="0 0 24 24"><path fill="none" stroke="currentColor" stroke-width="2" d="M12 4v11M7 10.500l5 5 5-5M5 16v3.500h14V16"/></svg></i><i class="ai2 red" style="left:1682.0px"><svg viewBox="0 0 24 24"><path fill="none" stroke="currentColor" stroke-width="1.700" d="M6.300 5.200h11.400v15.300H6.300zM4.500 4.800h15M10 8.500v9M14 8.500v9"/></svg></i>
</div>
<div class="tr" style="top:439px;height:50px">
<div class="c n" style="left:8px">11135</div>
<div class="c" style="left:128px"><b class="bd ap" style="top:-1.5px">Aprobado</b></div>
<div class="c" style="left:296px"><span style="letter-spacing:-.13px">Pruebaasdadsadsa</span></div>
<div class="c" style="left:522px"><span style="letter-spacing:-.13px">Pruebaasdadsadsa</span></div>
<div class="c" style="left:709px">Automatización</div>
<div class="c" style="left:828px"><b class="bd fl" style="top:-1.5px">Flexible</b></div>
<div class="c" style="left:997px"><span style="letter-spacing:-.2px">Joaquin Tagle</span></div>
<div class="c n d" style="left:1125px">18.638.247-1</div>
<div class="c n" style="left:1245px">2/2</div>
<div class="c n" style="left:1365px">08/08/2025</div>
<div class="c n" style="left:1485px">08/08/2025</div>
<i class="ai2" style="left:1614.0px"><svg viewBox="0 0 24 24"><path fill="currentColor" d="M7 9H2V7h5v2zm0 3H2v2h5v-2zm13.59 7l-3.83-3.83c-.8.52-1.74.83-2.76.83-2.76 0-5-2.24-5-5s2.24-5 5-5 5 2.24 5 5c0 1.02-.31 1.96-.83 2.75L22 17.59 20.59 19zM17 11c0-1.650-1.350-3-3-3s-3 1.350-3 3 1.350 3 3 3 3-1.350 3-3zM2 19h10v-2H2v2z"/></svg></i><i class="ai2" style="left:1648.0px"><svg viewBox="0 0 24 24"><path fill="none" stroke="currentColor" stroke-width="2" d="M12 4v11M7 10.500l5 5 5-5M5 16v3.500h14V16"/></svg></i><i class="ai2 red" style="left:1682.0px"><svg viewBox="0 0 24 24"><path fill="none" stroke="currentColor" stroke-width="1.700" d="M6.300 5.200h11.400v15.300H6.300zM4.500 4.800h15M10 8.500v9M14 8.500v9"/></svg></i>
</div>
<div class="tr" style="top:489px;height:56px">
<div class="c n" style="left:8px">11069</div>
<div class="c" style="left:128px"><b class="bd er">Error</b></div>
<div class="c" style="left:296px"><span style="letter-spacing:0">[ERROR] Automatización con<br>items</span></div>
<div class="c" style="left:522px">[ERROR] Automatización<br>con items</div>
<div class="c" style="left:709px">Automatización</div>
<div class="c" style="left:828px"><b class="bd fl">Flexible</b></div>
<div class="c" style="left:997px"><span style="letter-spacing:-.17px">Tomás Rojas</span></div>
<div class="c n d" style="left:1125px">10.519.481-1</div>
<div class="c n" style="left:1245px">2/2</div>
<div class="c n" style="left:1365px">06/08/2025</div>
<div class="c n" style="left:1485px">06/08/2025</div>
<i class="ai2" style="left:1611.5px"><svg viewBox="0 0 24 24"><path fill="currentColor" d="M7 9H2V7h5v2zm0 3H2v2h5v-2zm13.59 7l-3.83-3.83c-.8.52-1.74.83-2.76.83-2.76 0-5-2.24-5-5s2.24-5 5-5 5 2.24 5 5c0 1.02-.31 1.96-.83 2.75L22 17.59 20.59 19zM17 11c0-1.650-1.350-3-3-3s-3 1.350-3 3 1.350 3 3 3 3-1.350 3-3zM2 19h10v-2H2v2z"/></svg></i><i class="ai2" style="left:1646.5px"><svg viewBox="0 0 24 24"><path fill="currentColor" d="M12 6v3l4-4-4-4v3c-4.420 0-8 3.580-8 8 0 1.570.46 3.030 1.240 4.260L6.7 14.8c-.45-.83-.7-1.790-.7-2.800 0-3.310 2.690-6 6-6zm6.760 1.740L17.3 9.200c.44.84.7 1.790.7 2.800 0 3.310-2.690 6-6 6v-3l-4 4 4 4v-3c4.420 0 8-3.580 8-8 0-1.570-.46-3.030-1.240-4.260z"/></svg></i><i class="ai2" style="left:1681.0px"><svg viewBox="0 0 24 24"><path fill="currentColor" d="M12 8c1.1 0 2-.9 2-2s-.9-2-2-2-2 .9-2 2 .9 2 2 2zm0 2c-1.1 0-2 .9-2 2s.9 2 2 2 2-.9 2-2-.9-2-2-2zm0 6c-1.1 0-2 .9-2 2s.9 2 2 2 2-.9 2-2-.9-2-2-2z"/></svg></i>
</div>
<div class="tr" style="top:545px;height:56px">
<div class="c n" style="left:8px">11068</div>
<div class="c" style="left:128px"><b class="bd ap">Aprobado</b></div>
<div class="c" style="left:296px"><span style="letter-spacing:0">automatización con resultado TP</span></div>
<div class="c" style="left:522px">automatización con<br>resultado TP</div>
<div class="c" style="left:709px">Automatización</div>
<div class="c" style="left:828px"><b class="bd fl">Flexible</b></div>
<div class="c" style="left:997px"><span style="letter-spacing:-.17px">Tomás Rojas</span></div>
<div class="c n d" style="left:1125px">10.519.481-1</div>
<div class="c n" style="left:1245px">2/2</div>
<div class="c n" style="left:1365px">06/08/2025</div>
<div class="c n" style="left:1485px">06/08/2025</div>
<i class="ai2" style="left:1614.0px"><svg viewBox="0 0 24 24"><path fill="currentColor" d="M7 9H2V7h5v2zm0 3H2v2h5v-2zm13.59 7l-3.83-3.83c-.8.52-1.74.83-2.76.83-2.76 0-5-2.24-5-5s2.24-5 5-5 5 2.24 5 5c0 1.02-.31 1.96-.83 2.75L22 17.59 20.59 19zM17 11c0-1.650-1.350-3-3-3s-3 1.350-3 3 1.350 3 3 3 3-1.350 3-3zM2 19h10v-2H2v2z"/></svg></i><i class="ai2" style="left:1648.0px"><svg viewBox="0 0 24 24"><path fill="none" stroke="currentColor" stroke-width="2" d="M12 4v11M7 10.500l5 5 5-5M5 16v3.500h14V16"/></svg></i><i class="ai2 red" style="left:1682.0px"><svg viewBox="0 0 24 24"><path fill="none" stroke="currentColor" stroke-width="1.700" d="M6.300 5.200h11.400v15.300H6.300zM4.500 4.800h15M10 8.500v9M14 8.500v9"/></svg></i>
</div>
</div>
<!--/TABLE-->
</body>
</html>
